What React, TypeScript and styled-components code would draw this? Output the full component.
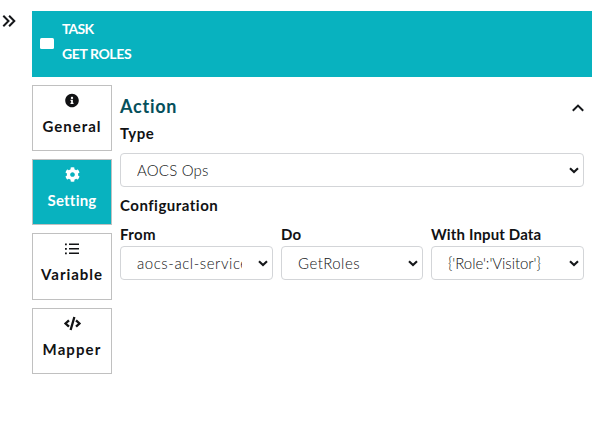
import React from "react";
import styled, { createGlobalStyle } from "styled-components";
import { FaInfoCircle, FaCog, FaCode } from "react-icons/fa";

const teal = "#08b2bf";

const GlobalStyle = createGlobalStyle`
  * { box-sizing: border-box; }
  body {
    margin: 0;
    background: #fff;
    color: #111214;
    font-family: "Century Gothic", Lato, sans-serif;
    font-size: 15px;
    overflow: hidden;
  }
`;

const Page = styled.main`
  display: flex;
  width: 601px;
  height: 430px;
  padding: 11px 9px 0 0;
`;

const Rail = styled.aside`
  width: 32px;
  padding-left: 2px;

  svg { display: block; margin-top: 4px; }
`;

const Panel = styled.section`
  flex: 1;
`;

const Header = styled.header`
  display: flex;
  align-items: center;
  gap: 8px;
  height: 66px;
  padding-left: 8px;
  background: ${teal};
  color: #fff;
`;

const Swatch = styled.span`
  width: 14px;
  height: 11px;
  margin-bottom: 1px;
  border-radius: 1.5px;
  background: #fff;
`;

const Titles = styled.div`
  font-size: 14px;
  font-weight: 700;
  line-height: 25px;
  padding-bottom: 7px;
`;

const Title = styled.div<{ $spacing: number }>`
  letter-spacing: ${(p) => p.$spacing}px;
`;

const Body = styled.div`
  display: flex;
  gap: 8px;
  padding-top: 8px;
`;

const Tabs = styled.nav`
  display: flex;
  flex-direction: column;
  gap: 8px;
  width: 80px;
`;

const Tab = styled.button<{ $active?: boolean; $spacing: number }>`
  display: flex;
  flex-direction: column;
  align-items: center;
  height: 66.2px;
  padding: 7px 0 0;
  border: 1px solid #c0c0c0;
  background: ${(p) => (p.$active ? teal : "#fff")};
  color: ${(p) => (p.$active ? "#fff" : "#111214")};
  font: 700 15px/24px "Century Gothic", Lato, sans-serif;
  letter-spacing: ${(p) => p.$spacing}px;
  white-space: nowrap;

  svg { height: 15px; margin-bottom: 6px; }
`;

const Form = styled.div`
  width: 464px;
`;

const SectionHead = styled.div`
  display: flex;
  justify-content: space-between;
  align-items: center;
  height: 37px;
  padding-top: 4px;

  svg { margin-top: 4px; }
`;

const Heading = styled.h2`
  margin: 0;
  color: #054f5b;
  font-size: 18px;
  line-height: 24px;
  letter-spacing: 0.75px;
`;

const Label = styled.label<{ $spacing: number }>`
  display: block;
  font-weight: 700;
  line-height: 22px;
  white-space: nowrap;
  letter-spacing: ${(p) => p.$spacing}px;
`;

const TypeField = styled.div`
  display: flex;
  flex-direction: column;
  gap: 9px;
  height: 72px;
`;

const Columns = styled.div`
  display: grid;
  grid-template-columns: 153px 142px 153px;
  gap: 8px;
  padding-top: 7px;
`;

const Column = styled.div`
  display: flex;
  flex-direction: column;
  gap: 1px;
`;

const SelectBox = styled.div`
  position: relative;

  svg {
    position: absolute;
    right: 5px;
    top: 14px;
    pointer-events: none;
  }
`;

const Select = styled.select<{ $spacing: number }>`
  display: block;
  appearance: none;
  width: 100%;
  height: 34px;
  padding: 6px 30px 6px 16px;
  border: 1px solid #d3d5d8;
  border-radius: 4px;
  background: #fff;
  color: #111214;
  font: 300 15px/20px "Century Gothic", Lato, sans-serif;
  letter-spacing: ${(p) => p.$spacing}px;
  text-overflow: clip;
`;

function Choice({ value, spacing }: { value: string; spacing: number }) {
  return (
    <SelectBox>
      <Select $spacing={spacing} defaultValue={value}>
        <option>{value}</option>
      </Select>
      <svg width="10" height="7" viewBox="0 0 10 7" fill="none" stroke="#15171a" strokeWidth="2.1">
        <path d="M1 1.2 5 5l4-3.8" />
      </svg>
    </SelectBox>
  );
}

function ListIcon() {
  return (
    <svg width="16" height="15" viewBox="0 0 16 15" fill="none" stroke="currentColor">
      <path strokeWidth="1.4" d="M5 3.3h10M5 7.8h10M5 12.3h10" />
      <path strokeWidth="1.8" d="M1 3.3h1.8M1 7.8h1.8M1 12.3h1.8" />
    </svg>
  );
}

export default function App() {
  return (
    <>
      <GlobalStyle />
      <Page>
        <Rail>
          <svg width="14" height="12" viewBox="0 0 14 12" fill="none" stroke="#15171a" strokeWidth="2">
            <path d="M1.3 .8 6.5 6 1.3 11.2M7.1 .8 12.3 6 7.1 11.2" />
          </svg>
        </Rail>
        <Panel>
          <Header>
            <Swatch />
            <Titles>
              <Title $spacing={-0.8}>TASK</Title>
              <Title $spacing={-0.4}>GET ROLES</Title>
            </Titles>
          </Header>
          <Body>
            <Tabs>
              <Tab $spacing={1}><FaInfoCircle size={14} /><span>General</span></Tab>
              <Tab $active $spacing={0.2}><FaCog size={15} /><span>Setting</span></Tab>
              <Tab $spacing={0.95}><ListIcon /><span>Variable</span></Tab>
              <Tab $spacing={1.1}><FaCode size={17} /><span>Mapper</span></Tab>
            </Tabs>
            <Form>
              <SectionHead>
                <Heading>Action</Heading>
                <svg width="12" height="8" viewBox="0 0 12 8" fill="none" stroke="#15171a" strokeWidth="2">
                  <path d="M.8 6.8 6 1.6l5.2 5.2" />
                </svg>
              </SectionHead>
              <TypeField>
                <Label $spacing={0.5}>Type</Label>
                <Choice value="AOCS Ops" spacing={0.2} />
              </TypeField>
              <Label $spacing={0.5}>Configuration</Label>
              <Columns>
                <Column>
                  <Label $spacing={0.35}>From</Label>
                  <Choice value="aocs-acl-service" spacing={0.55} />
                </Column>
                <Column>
                  <Label $spacing={0.2}>Do</Label>
                  <Choice value="GetRoles" spacing={0.45} />
                </Column>
                <Column>
                  <Label $spacing={0.15}>With Input Data</Label>
                  <Choice value="{'Role':'Visitor'}" spacing={-0.05} />
                </Column>
              </Columns>
            </Form>
          </Body>
        </Panel>
      </Page>
    </>
  );
}
